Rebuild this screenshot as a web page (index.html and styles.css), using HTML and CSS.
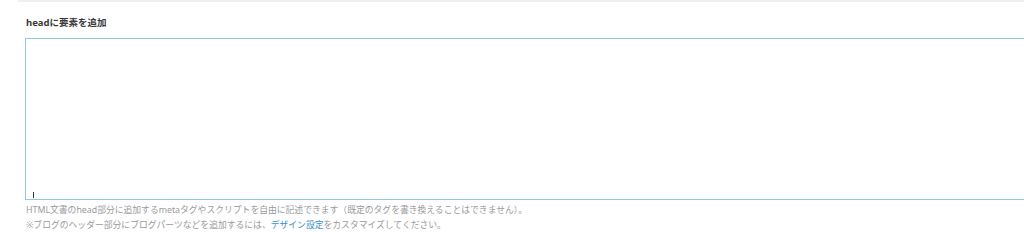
FILE: index.html
```html
<!DOCTYPE html>
<html lang="ja">
<head>
<meta charset="utf-8">
<link rel="stylesheet" href="styles.css">
</head>
<body>
<div class="topbar"></div>
<div class="section">
  <div class="label">headに要素を追加</div>
  <div class="editor"><span class="caret"></span></div>
  <p class="help">HTML文書のhead部分に追加するmetaタグやスクリプトを自由に記述できます（既定のタグを書き換えることはできません）。</p>
  <p class="help">※ブログのヘッダー部分にブログパーツなどを追加するには、<a class="link" href="#">デザイン設定</a>をカスタマイズしてください。</p>
</div>
</body>
</html>
```
FILE: styles.css
```css
html, body {
  margin: 0;
  padding: 0;
  background: #ffffff;
  overflow: hidden;
}
body {
  font-family: "Noto Sans", "Noto Sans CJK JP", sans-serif;
  width: 1024px;
  height: 232px;
}
.topbar {
  margin-left: 18px;
  height: 2px;
  background: #f0f0f0;
}
.section {
  padding-left: 25px;
}
.label {
  margin-top: 14px;
  margin-left: 1px;
  font-size: 9.5px;
  line-height: 14px;
  font-weight: bold;
  color: #3a3a3a;
}
.editor {
  margin-top: 8px;
  height: 159px;
  border: 1px solid #8ccae6;
  border-right: 0;
  display: flex;
  flex-direction: column;
  justify-content: flex-end;
  padding: 0 0 1px 7px;
}
.caret {
  display: block;
  width: 1px;
  height: 6px;
  background: #333;
}
.help {
  margin: 0 0 0 1px;
  font-size: 8.8px;
  line-height: 15px;
  color: #9a9a9a;
}
.help:first-of-type {
  margin-top: 3px;
}
.link {
  color: #3d8fcc;
  text-decoration: none;
}
```
